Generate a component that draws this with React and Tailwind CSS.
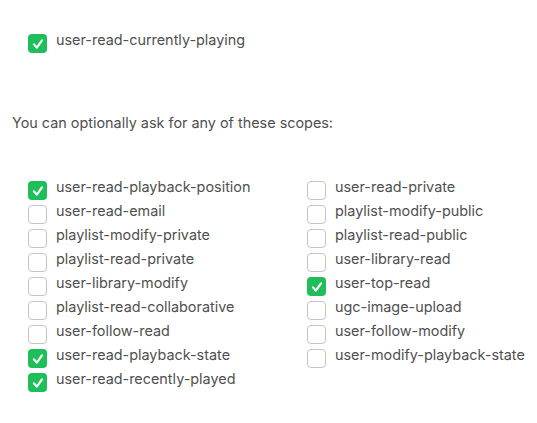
const left = [
  ["user-read-playback-position", true],
  ["user-read-email", false],
  ["playlist-modify-private", false],
  ["playlist-read-private", false],
  ["user-library-modify", false],
  ["playlist-read-collaborative", false],
  ["user-follow-read", false],
  ["user-read-playback-state", true],
  ["user-read-recently-played", true],
];

const right = [
  ["user-read-private", false],
  ["playlist-modify-public", false],
  ["playlist-read-public", false],
  ["user-library-read", false],
  ["user-top-read", true],
  ["ugc-image-upload", false],
  ["user-follow-modify", false],
  ["user-modify-playback-state", false],
];

function Box({ checked }) {
  if (checked) {
    return (
      <span className="mt-[6px] flex h-[19px] w-[19px] shrink-0 items-center justify-center rounded-[4px] bg-[#1fbe5b]">
        <svg width="14" height="14" viewBox="0 0 14 14" fill="none">
          <path d="M3 7.4 L5.8 10.6 L11 3.4" stroke="white" strokeWidth="2.2" strokeLinecap="round" strokeLinejoin="round" />
        </svg>
      </span>
    );
  }
  return <span className="mt-[6px] h-[19px] w-[19px] shrink-0 rounded-[4px] border border-[#c4c4c4] bg-white" />;
}

function Row({ label, checked }) {
  return (
    <div className="flex h-6 items-start gap-[9px]">
      <Box checked={checked} />
      <span className="leading-6">{label}</span>
    </div>
  );
}

export default function App() {
  return (
    <div
      className="h-[423px] w-[537px] bg-white pt-[28px] text-[14.4px] text-[#505050]"
      style={{ fontFamily: 'Inter, sans-serif' }}
    >
      <div className="pl-[28px]">
        <Row label="user-read-currently-playing" checked />
      </div>

      <p className="mt-[59px] pl-[12px] leading-6">You can optionally ask for any of these scopes:</p>

      <div className="mt-[40px] grid grid-cols-[279px_1fr] pl-[28px]">
        <div>
          {left.map(([l, c]) => (
            <Row key={l} label={l} checked={c} />
          ))}
        </div>
        <div>
          {right.map(([l, c]) => (
            <Row key={l} label={l} checked={c} />
          ))}
        </div>
      </div>
    </div>
  );
}
